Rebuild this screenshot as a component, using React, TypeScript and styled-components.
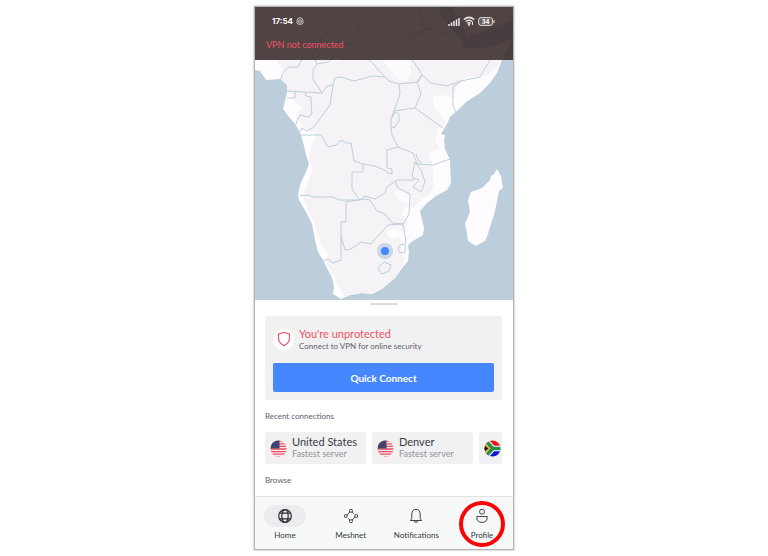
import React, { useId } from "react";
import styled, { createGlobalStyle } from "styled-components";

const GlobalStyle = createGlobalStyle`
  *, *::before, *::after { box-sizing: border-box; }
  body { margin: 0; background: #fff; font-family: Lato, "Open Sans", sans-serif; color: #3f4250; }
  button { font: inherit; color: inherit; border: 0; margin: 0; padding: 0; background: none; cursor: pointer; }
  h2, p { margin: 0; }
`;

const Page = styled.div`
  display: flex;
  justify-content: center;
  padding: 7px 0 6px;
`;

const Phone = styled.main`
  display: flex;
  flex-direction: column;
  width: 100%;
  max-width: 258px;
  background: #fff;
  box-shadow: 0 0 0 1px #b4b4b4, 0 0 2px 1px #a8a8a8;
`;

const MapArea = styled.section`
  display: grid;
  background: #bccddc;
  & > * { grid-area: 1 / 1; }
`;

const MapDrawing = styled.svg`
  display: block;
  width: 100%;
  height: auto;
`;

const Header = styled.header`
  z-index: 1;
  align-self: start;
  height: 53px;
  padding: 8px 18px 0 11px;
  background: rgba(52, 37, 39, 0.86);
`;

const StatusBar = styled.div`
  display: flex;
  align-items: center;
  height: 12px;
  padding-left: 6px;
  gap: 3px;
  color: #fff;
`;

const Clock = styled.span`
  font: 700 8px/12px Inter, sans-serif;
`;

const StatusIcons = styled.div`
  display: flex;
  align-items: center;
  gap: 3px;
  margin-left: auto;
`;

const Connection = styled.p`
  margin-top: 12px;
  font-size: 9px;
  line-height: 12px;
  color: #f24f63;
`;

const Sheet = styled.section`
  display: flex;
  flex-direction: column;
  padding: 3px 11px 0 10px;
`;

const Handle = styled.div`
  align-self: center;
  width: 28px;
  height: 2px;
  border-radius: 1px;
  background: #dcdadd;
`;

const Card = styled.section`
  margin-top: 11px;
  padding: 11px 8px 8px;
  border-radius: 3px;
  background: #f1f1f1;
`;

const CardTop = styled.div`
  display: flex;
  align-items: center;
  gap: 5px;
`;

const ShieldBadge = styled.span`
  display: grid;
  place-items: center;
  width: 21px;
  height: 21px;
  border-radius: 50%;
  background: #fff;
`;

const CardTitle = styled.h2`
  font-size: 11px;
  line-height: 14px;
  font-weight: 400;
  color: #ea5365;
`;

const CardText = styled.p`
  font-size: 8px;
  line-height: 10px;
  color: #5d606d;
`;

const ConnectButton = styled.button`
  display: block;
  width: 100%;
  height: 29px;
  margin-top: 12px;
  border-radius: 2px;
  background: #4687ff;
  color: #fff;
  font-size: 10px;
  line-height: 12px;
  font-weight: 700;
`;

const Label = styled.h2`
  margin-top: 11px;
  font-size: 8px;
  line-height: 10px;
  font-weight: 400;
  color: #5d606d;
`;

const Recents = styled.div`
  display: flex;
  gap: 6px;
  margin-top: 11px;
  overflow: hidden;
`;

const Tile = styled.button`
  display: flex;
  flex: 0 0 101px;
  align-items: center;
  gap: 5px;
  height: 32px;
  padding: 0 5px;
  border-radius: 3px;
  background: #f1f1f1;
  text-align: left;
  white-space: nowrap;
  svg { flex: none; }
`;

const TileText = styled.span`
  display: flex;
  flex-direction: column;
`;

const Place = styled.span`
  font-size: 11px;
  line-height: 12px;
  color: #393b49;
`;

const Server = styled.span`
  font-size: 9px;
  line-height: 12px;
  color: #92959f;
`;

const Nav = styled.nav`
  display: flex;
  justify-content: space-between;
  height: 53px;
  margin-top: 11px;
  padding: 8px 10px 0 9px;
  border-top: 1px solid #e0e2e2;
  background: #f7f9f8;
`;

const NavItem = styled.button`
  position: relative;
  display: flex;
  flex-direction: column;
  align-items: center;
  gap: 3px;
  width: 42px;
  height: 36px;
  font-size: 8px;
  line-height: 10px;
  white-space: nowrap;
  color: #363842;
`;

const Pill = styled.span<{ $active?: boolean }>`
  display: grid;
  place-items: center;
  width: 42px;
  height: 22px;
  border-radius: 11px;
  background: ${(p) => (p.$active ? "#ececee" : "transparent")};
`;

const Ring = styled.span`
  position: absolute;
  top: -4px;
  left: -2px;
  width: 46px;
  height: 46px;
  border: 4px solid #fa0505;
  border-radius: 50%;
`;

const AfricaMap = () => (
  <MapDrawing viewBox="255 7 258 293" role="img" aria-label="Map of southern Africa">
    <defs>
      <clipPath id="land">
        <path d="M255 7V70L260 71L266 80L281 79L287 85L287 92L286 97L283 109L289 117L296 125L301 135L304 146L306 155L309 164L306 172L302 180L300 185L298 195L299 200L306 212L312 224L315 240L318 252L323 260L327 268L332 278L334 286L333 294L341 299L350 295L362 293L372 294L382 289L395 278L403 267L408 261L409 251L408 246L411 242L423 235L424 228L421 215L420 211L427 203L436 196L447 190L451 183L450 160L445 149L444 141L445 135L441 134L448 122L450 117L459 109L466 102L480 93L490 83L497 73L502 60L513 35V7Z" />
      </clipPath>
    </defs>
    <path fill="#bccddc" d="M255 7H513V300H255Z" />
    <g clipPath="url(#land)">
      <path fill="#fefcff" d="M255 7H513V300H255Z" />
      <path
        fill="#f6f3f7"
        d="M255 7H513V42L495 70L487 75L466 77L457 86L453 98L444 95L433 97L434 107L440 114L447 124L438 128L435 140L440 149L429 153L432 163L434 184L430 195L421 199L414 208L407 205L402 213L408 223L403 233L395 228L386 232L391 239L400 237L402 252L405 261L395 278L382 290L371 296L345 296L340 290L336 280L326 263L329 253L322 246L317 231L313 220L307 208L304 200L305 189L309 179L313 169L309 159L312 146L315 138L315 133L304 128L301 123L295 118L297 112L303 109L302 105L296 104L293 96L287 91L281 79L283 70L276 60L255 60Z"
      />
      <path fill="#fefcff" d="M382 60H410L411 72L407 81H401L395 77L390 69ZM325 64L337 62L345 57L330 58ZM394 190Q404 191 410 196Q414 203 407 205Q397 201 394 190ZM418 160L434 167V155L444 150V170Z" opacity=".8" />
      <path fill="#bccddc" d="M437 7H452L461 20L467 37L513 20V38L492 47L463 48L462 40L447 24Z" />
    </g>
    <path fill="#fefcff" d="M497 169L501 176L503 188L499 191L495 211L488 234L485 241L476 246L468 241L467 233L465 224L470 212L468 200L471 192L482 188L490 180L491 176L494 174Z" />
    <g fill="none" stroke="#bdceda" strokeWidth="1" strokeLinejoin="round">
      <path d="M281 79Q283 69 290 67L298 67L303 57M312 55L317 64L313 70L313 79L322 93L327 86L333 85L335 78L341 77L354 81L372 76L385 77L389 81L399 84L418 82L422 75L431 83L447 86L461 81L480 77L490 60M317 64L329 62L336 55M365 55L375 66L385 77" />
      <path d="M287 91L320 93L322 93M287 98H295V91M305 93L306 96L311 97V103L312 114L308 117L300 115L297 121L296 124M333 85L330 105L321 117L314 127L307 131L302 128L299 134M301 135H321L328 147L336 145L340 141L344 141L345 143H351L354 161L363 164V172H352V189L359 199" />
      <path d="M411 58L418 68L422 75L417 82L421 94L415 108L394 111L400 94L399 84M415 108L443 128M461 81L453 87V106L456 112M394 111L391 118L391 128L392 135L398 147L413 153L417 164L433 165L450 159M392 118L395 112L399 114V121L395 127L391 128M363 164L375 166L384 170L388 173L392 174V169L387 168L387 150L398 147" />
      <path d="M300 196L308 195L313 197L333 197L339 200L360 200L365 196L375 199L385 193L387 187L397 180L414 180L412 176L415 162L421 170L425 182L421 192L413 187L419 180L414 178M341 236V222H346V202L364 199L370 200L377 211L385 214L392 223L403 224L409 214L410 194L397 187L396 182M323 261L328 259L333 263L341 260V236L345 250L351 249L361 242L371 244L377 237L388 225L403 224L405 235L406 244M378 268L384 262L391 265L389 271L382 274ZM400 245L405 244V252L400 253L398 249ZM422 163L418 160L416 154" />
    </g>
    <g fill="none" stroke="#657080" strokeWidth=".6" strokeDasharray="2 1" opacity=".7">
      <path d="M255 45L270 35L283 41L292 25L306 12M270 12L280 21L294 18M312 56L325 33L350 45L363 20L354 8M395 53L408 40L425 30L443 21M425 30L420 10M407 35L430 29L462 38L491 58M355 38L375 31L392 49" />
    </g>
    <circle cx="385" cy="251" r="8" fill="#bccddc" opacity=".75" />
    <circle cx="385" cy="251" r="4" fill="#4687ff" />
  </MapDrawing>
);

const Shield = () => (
  <svg width="14" height="16" viewBox="0 0 14 16" fill="none" stroke="#e65666" strokeWidth="1.2" strokeLinejoin="round" aria-hidden="true">
    <path d="M7 1.3L12.5 3.1V7.5Q12.3 11.8 7 14.6Q1.7 11.8 1.5 7.5V3.1Z" />
  </svg>
);

const UsFlag = () => {
  const clip = useId();
  return (
    <svg width="17" height="17" viewBox="0 0 17 17" aria-hidden="true">
      <defs><clipPath id={clip}><circle cx="8.5" cy="8.5" r="8" /></clipPath></defs>
      <g clipPath={`url(#${clip})`}>
        <path fill="#f8e9ec" d="M0 0H17V17H0Z" />
        <path stroke="#eb4f60" strokeWidth="1.3" d="M0 1.2H17M0 3.8H17M0 6.4H17M0 9H17M0 11.6H17M0 14.2H17M0 16.6H17" />
        <path fill="#3f4263" d="M0 0H9.5V8.6H0Z" />
        <path fill="none" stroke="#4058ce" strokeWidth="1" strokeDasharray="1 2" d="M2 3H9M1 6H9" />
      </g>
    </svg>
  );
};

const ZaFlag = () => (
  <svg width="17" height="17" viewBox="0 0 17 17" aria-hidden="true">
    <defs><clipPath id="za"><circle cx="8.5" cy="8.5" r="8" /></clipPath></defs>
    <g clipPath="url(#za)">
      <path fill="#f51717" d="M0 0H17V8.5H0Z" />
      <path fill="#1018cf" d="M0 8.5H17V17H0Z" />
      <path fill="none" stroke="#fff" strokeWidth="5.6" d="M1 0L9 8.5L1 17M8 8.5H17" />
      <path fill="#e9b53c" d="M0 2L7.5 8.5L0 15Z" />
      <path fill="none" stroke="#278f4c" strokeWidth="3.4" d="M1 0L9 8.5L1 17M8 8.5H17" />
      <path fill="#e9b53c" d="M0 3.3L5.8 8.5L0 13.7Z" />
      <path fill="#111" d="M0 5L4.3 8.5L0 12Z" />
    </g>
  </svg>
);

const Globe = () => (
  <svg width="16" height="16" viewBox="0 0 16 16" fill="none" stroke="#292b36" strokeWidth="1.2" aria-hidden="true">
    <circle cx="8" cy="8" r="6.3" />
    <ellipse cx="8" cy="8" rx="3.2" ry="6.3" />
    <path d="M2.5 5.2H13.5M2.5 10.8H13.5" />
  </svg>
);

const Mesh = () => (
  <svg width="16" height="16" viewBox="0 0 16 16" fill="none" stroke="#41434d" strokeWidth="1" aria-hidden="true">
    <circle cx="8" cy="2.8" r="1.5" /><circle cx="13.2" cy="8" r="1.5" />
    <circle cx="8" cy="13.2" r="1.5" /><circle cx="2.8" cy="8" r="1.5" />
    <path d="M4 7L6.9 4M9.1 4L10.8 5.6M12 9L9.1 12M6.9 12L5.2 10.4" />
  </svg>
);

const Bell = () => (
  <svg width="16" height="16" viewBox="0 0 16 16" fill="none" stroke="#41434d" strokeWidth="1" strokeLinejoin="round" aria-hidden="true">
    <path d="M2.3 12.5L3.8 10.7V6Q4 1.5 8 1.3Q12 1.5 12.2 6V10.7L13.7 12.5ZM6.4 12.5Q6.5 14.5 8 14.5Q9.5 14.5 9.6 12.5" />
  </svg>
);

const Person = () => (
  <svg width="16" height="16" viewBox="0 0 16 16" fill="none" stroke="#41434d" strokeWidth="1" strokeLinejoin="round" aria-hidden="true">
    <circle cx="8" cy="3.7" r="2.5" />
    <path d="M2.8 8.5H13.2Q13.5 14.4 8 14.4Q2.5 14.4 2.8 8.5Z" />
  </svg>
);

const navItems = [
  { name: "Home", icon: <Globe /> },
  { name: "Meshnet", icon: <Mesh /> },
  { name: "Notifications", icon: <Bell /> },
  { name: "Profile", icon: <Person /> },
];

export default function App() {
  return (
    <Page>
      <GlobalStyle />
      <Phone>
        <MapArea>
          <AfricaMap />
          <Header>
            <StatusBar>
              <Clock>17:54</Clock>
              <svg width="8" height="8" viewBox="0 0 8 8" fill="none" stroke="#d3cccd" aria-hidden="true">
                <path strokeWidth=".9" d="M2 7.2Q.2 6 1 4.1Q1.3.6 4 .6Q6.7.6 7 4.1Q7.8 6 6 7.2ZM2.4 5.8Q2 2.7 4 2.6Q6 2.7 5.6 5.8M4 4V7" />
              </svg>
              <StatusIcons>
                <svg width="12" height="9" viewBox="0 0 12 9" stroke="#eee9e9" strokeWidth="1.5" aria-hidden="true">
                  <path d="M1 9V7M3.5 9V5.5M6 9V4M8.5 9V2.5M11 9V1" />
                </svg>
                <svg width="12" height="10" viewBox="0 0 12 10" fill="none" stroke="#eee9e9" strokeWidth="1.5" aria-hidden="true">
                  <path d="M.8 3.5Q6-.8 11.2 3.5M2.6 5.5Q6 2.8 9.4 5.5M4.3 7.3Q6 6.1 7.7 7.3" />
                  <circle cx="6" cy="8.8" r=".4" /><path strokeWidth="1" d="M9.5 6V9" />
                </svg>
                <svg width="17" height="9" viewBox="0 0 17 9" aria-hidden="true">
                  <rect x=".6" y=".6" width="14" height="7.8" rx="2.5" fill="#675b5d" stroke="#e4dfdf" />
                  <path d="M16 3V6" stroke="#e4dfdf" />
                  <text x="7.7" y="6.8" textAnchor="middle" fontFamily="Inter, sans-serif" fontSize="6" fontWeight="700" fill="#fff">34</text>
                </svg>
              </StatusIcons>
            </StatusBar>
            <Connection>VPN not connected</Connection>
          </Header>
        </MapArea>
        <Sheet>
          <Handle />
          <Card>
            <CardTop>
              <ShieldBadge><Shield /></ShieldBadge>
              <div>
                <CardTitle>You're unprotected</CardTitle>
                <CardText>Connect to VPN for online security</CardText>
              </div>
            </CardTop>
            <ConnectButton type="button">Quick Connect</ConnectButton>
          </Card>
          <Label>Recent connections</Label>
          <Recents>
            <Tile type="button">
              <UsFlag />
              <TileText><Place>United States</Place><Server>Fastest server</Server></TileText>
            </Tile>
            <Tile type="button">
              <UsFlag />
              <TileText><Place>Denver</Place><Server>Fastest server</Server></TileText>
            </Tile>
            <Tile type="button" aria-label="South Africa"><ZaFlag /></Tile>
          </Recents>
          <Label>Browse</Label>
        </Sheet>
        <Nav aria-label="Main">
          {navItems.map(({ name, icon }, i) => (
            <NavItem key={name} type="button" aria-current={i === 0 ? "page" : undefined}>
              <Pill $active={i === 0}>{icon}</Pill>
              {name}
              {name === "Profile" && <Ring />}
            </NavItem>
          ))}
        </Nav>
      </Phone>
    </Page>
  );
}
